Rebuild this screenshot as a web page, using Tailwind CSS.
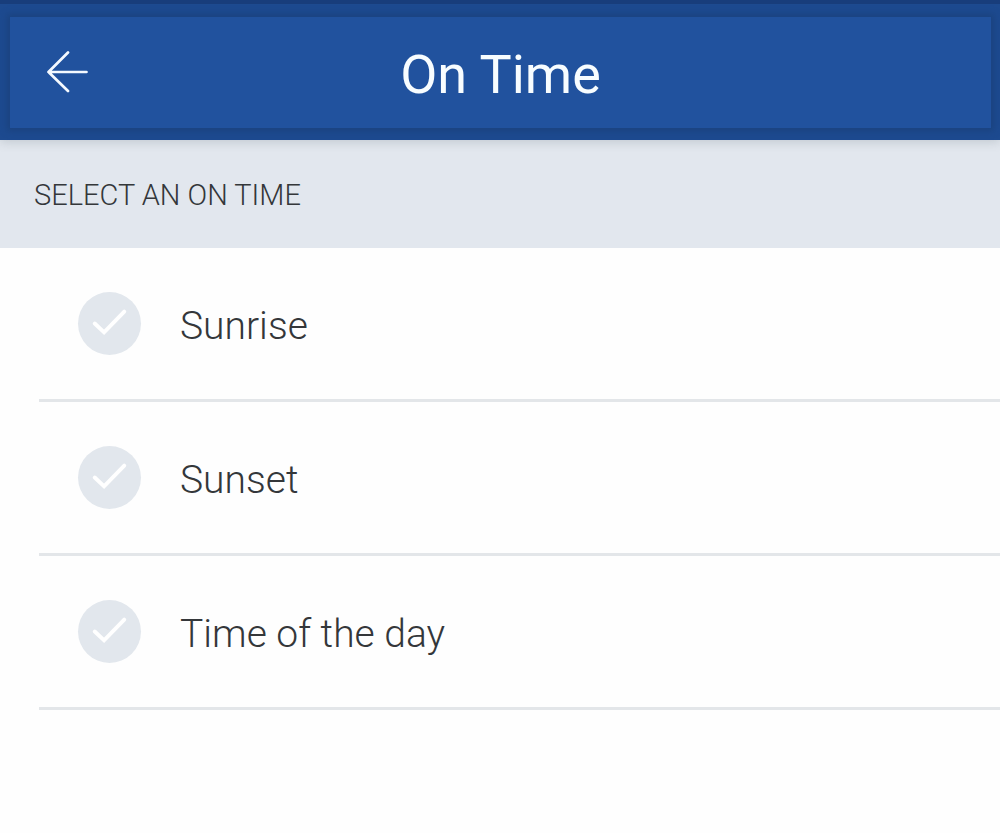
<!DOCTYPE html>
<html lang="en">
  <head>
    <meta charset="UTF-8" />
    <meta name="viewport" content="width=device-width, initial-scale=1.0" />
    <title>On Time</title>
    <script src="https://cdn.jsdelivr.net/npm/@tailwindcss/browser@4"></script>
  </head>

  <body class="bg-[#fefefe] min-h-screen font-['Roboto',sans-serif] text-[#34373a]">
    <!-- Header -->
    <header class="relative border-t-4 border-[#183d7b] bg-[#1d4a8f] pt-[13px] pb-3 pl-[10px] pr-[9px] shadow-[0_2px_10px_rgba(60,80,90,0.2)]">
      <div class="grid grid-cols-[1fr_auto_1fr] items-center h-[111px] bg-[#21529e] shadow-[0_0_6px_3px_#1b4380]">
        <button type="button" aria-label="Back" class="justify-self-start ml-9 text-[#f4f9ff]">
          <svg class="w-[43px] h-[43px]" viewBox="0 0 43 43" fill="none" stroke="currentColor" stroke-width="2.7" stroke-linecap="round" stroke-linejoin="round">
            <path d="M22 1.500 2.500 21 22 40M2.500 21H40.500" />
          </svg>
        </button>
        <h1 class="text-[54px] leading-[64px] pt-1 text-[#f8fdff]">On Time</h1>
      </div>
    </header>

    <!-- Options -->
    <main>
      <h2 id="section" class="bg-[#e2e7ee] h-[108px] px-[34px] pt-0.5 flex items-center text-[29px] leading-9 font-light">SELECT AN ON TIME</h2>

      <div role="radiogroup" aria-labelledby="section" class="pl-[39px]">
        <label class="flex items-center gap-[39px] h-[154px] pl-[39px] border-b-3 border-[#e3e6e9] cursor-pointer">
          <span class="grid place-items-center shrink-0">
            <input type="radio" name="on-time" value="sunrise" class="col-start-1 row-start-1 appearance-none size-[63px] rounded-full bg-[#e2e7ed] checked:bg-[#21529e]" />
            <svg class="col-start-1 row-start-1 size-[63px] pointer-events-none" viewBox="0 0 64 64" fill="none" stroke="#fff" stroke-width="4" stroke-linecap="round">
              <path d="M17 32 26.500 41 47 20" />
            </svg>
          </span>
          <span class="text-[39px] leading-[48px] pt-1 font-light">Sunrise</span>
        </label>

        <label class="flex items-center gap-[39px] h-[154px] pl-[39px] border-b-3 border-[#e3e6e9] cursor-pointer">
          <span class="grid place-items-center shrink-0">
            <input type="radio" name="on-time" value="sunset" class="col-start-1 row-start-1 appearance-none size-[63px] rounded-full bg-[#e2e7ed] checked:bg-[#21529e]" />
            <svg class="col-start-1 row-start-1 size-[63px] pointer-events-none" viewBox="0 0 64 64" fill="none" stroke="#fff" stroke-width="4" stroke-linecap="round">
              <path d="M17 32 26.500 41 47 20" />
            </svg>
          </span>
          <span class="text-[39px] leading-[48px] pt-1 font-light">Sunset</span>
        </label>

        <label class="flex items-center gap-[39px] h-[154px] pl-[39px] border-b-3 border-[#e3e6e9] cursor-pointer">
          <span class="grid place-items-center shrink-0">
            <input type="radio" name="on-time" value="time" class="col-start-1 row-start-1 appearance-none size-[63px] rounded-full bg-[#e2e7ed] checked:bg-[#21529e]" />
            <svg class="col-start-1 row-start-1 size-[63px] pointer-events-none" viewBox="0 0 64 64" fill="none" stroke="#fff" stroke-width="4" stroke-linecap="round">
              <path d="M17 32 26.500 41 47 20" />
            </svg>
          </span>
          <span class="text-[39px] leading-[48px] pt-1 font-light">Time of the day</span>
        </label>
      </div>
    </main>
  </body>
</html>
